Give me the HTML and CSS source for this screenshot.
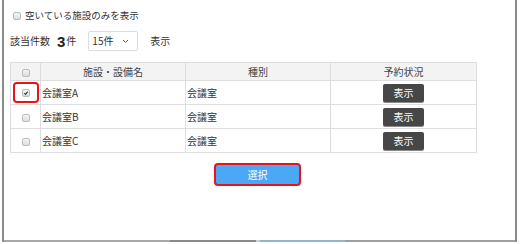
FILE: index.html
```html
<!DOCTYPE html>
<html lang="ja">
<head>
<meta charset="utf-8">
<link rel="stylesheet" href="styles.css">
</head>
<body>
<div class="frame">
  <div class="content">
    <label class="opt"><span class="cb"></span><span class="opt-text">空いている施設のみを表示</span></label>
    <div class="count">
      <span>該当件数</span>
      <b class="num">3</b><span class="unit">件</span>
      <div class="select"><span>15件</span><svg width="7" height="5" viewBox="0 0 7 5"><path d="M1 1 L3.5 3.5 L6 1" fill="none" stroke="#555" stroke-width="1"/></svg></div>
      <span class="show">表示</span>
    </div>
    <table class="grid">
      <colgroup><col class="c1"><col class="c2"><col class="c3"><col class="c4"></colgroup>
      <thead>
        <tr><th><span class="cb"></span></th><th>施設・設備名</th><th>種別</th><th>予約状況</th></tr>
      </thead>
      <tbody>
        <tr><td class="chk"><span class="hl"><span class="cb on"><svg width="8" height="8" viewBox="0 0 8 8"><path d="M1.8 4.2 L3.4 5.8 L6.3 2.2" fill="none" stroke="#333" stroke-width="1.4"/></svg></span></span></td><td>会議室A</td><td>会議室</td><td class="st"><button class="btn">表示</button></td></tr>
        <tr><td class="chk"><span class="cb"></span></td><td>会議室B</td><td>会議室</td><td class="st"><button class="btn">表示</button></td></tr>
        <tr><td class="chk"><span class="cb"></span></td><td>会議室C</td><td>会議室</td><td class="st"><button class="btn">表示</button></td></tr>
      </tbody>
    </table>
    <div class="actions"><button class="pick">選択</button></div>
  </div>
  <div class="bar"><span class="s1"></span><span class="s2"></span><span class="gap"></span><span class="s3"></span><span class="s4"></span></div>
</div>
</body>
</html>
```
FILE: styles.css
```css
* { box-sizing: border-box; }
html, body { margin: 0; padding: 0; background: #fff; }
body { font-family: "Noto Sans CJK JP", "Noto Sans", sans-serif; font-size: 10px; color: #333; }
.frame { width: 515px; height: 242px; margin-left: 2px; border-left: 2px solid #8a8a8a; border-right: 2px solid #8a8a8a; display: flex; flex-direction: column; }
.content { flex: 1; padding-left: 6px; }
.opt { height: 31px; display: flex; align-items: center; gap: 4px; padding-left: 3px; line-height: 1; }
.opt-text { font-size: 9.5px; }
.cb { display: inline-flex; align-items: center; justify-content: center; width: 8px; height: 8px; border: 1px solid #bdbdbd; border-radius: 2px; background: linear-gradient(#f4f4f4, #dcdcdc); vertical-align: middle; }
.cb svg { display: block; }
.count { height: 20px; display: flex; align-items: center; line-height: 1; }
.num { font-family: "Liberation Sans", sans-serif; font-size: 15px; font-weight: bold; margin-left: 7px; color: #222; }
.unit { margin-left: 1px; }
.select { margin-left: 12px; width: 50px; height: 20px; border: 1px solid #ddd; border-radius: 2px; display: flex; align-items: center; justify-content: space-between; padding: 0 8px 0 3px; }
.show { margin-left: 12px; }
.grid { margin-top: 11px; width: 466px; border-collapse: collapse; table-layout: fixed; }
.c1 { width: 30px; } .c2 { width: 145px; } .c3 { width: 145px; } .c4 { width: 146px; }
.grid th, .grid td { border: 1px solid #dedede; padding: 0 1px; line-height: 1; }
.grid th { height: 18px; background: #f3f3f3; font-weight: normal; text-align: center; color: #444; }
.grid td { height: 24px; text-align: left; }
.grid td.chk, .grid td.st { text-align: center; }
.grid th .cb { display: inline-flex; }
.hl { display: inline-flex; align-items: center; justify-content: center; width: 26px; height: 21px; border: 2px solid #e8141b; border-radius: 4px; vertical-align: middle; }
.btn { width: 41px; height: 18px; border: 0; border-radius: 2px; background: #474747; color: #fff; font-family: inherit; font-size: 10px; padding: 0; line-height: 18px; vertical-align: middle; box-shadow: 0 1px 0 #888; }
.actions { margin-top: 10px; margin-left: 204px; display: flex; }
.pick { width: 87px; height: 23px; border: 2px solid #e8141b; border-radius: 4px; background: #4aa8f6; color: #fff; font-family: inherit; font-size: 10px; padding: 0; }
.bar { height: 2px; display: flex; background: #9a9a9a; }
.bar span { display: block; height: 2px; }
.bar .s1 { width: 166px; background: #a8a8a8; }
.bar .s2 { width: 86px; background: #8a8a8a; }
.bar .gap { width: 4px; background: #d0d0d0; }
.bar .s3 { width: 85px; background: #8fb4d4; }
.bar .s4 { flex: 1; background: #a0a0a0; }
```
